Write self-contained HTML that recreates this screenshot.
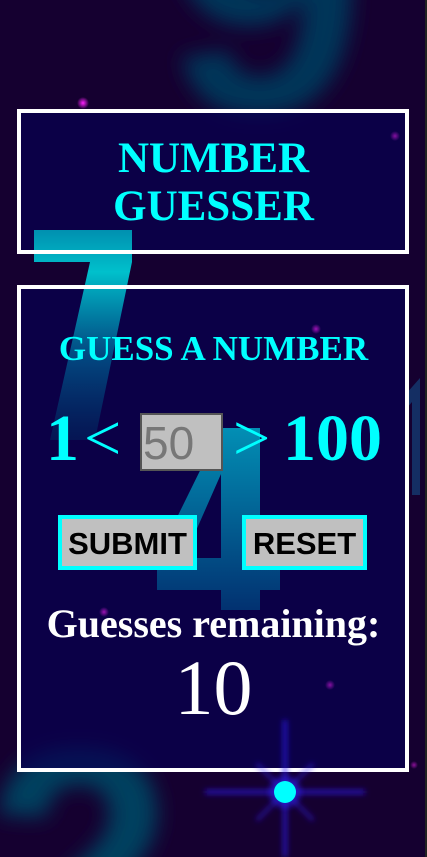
<!DOCTYPE html>
<html><head><meta charset="utf-8"><style>
html,body{margin:0;padding:0;overflow:hidden;width:427px;height:857px}
body{background:#150030;position:relative;font-family:"Liberation Serif",serif}
.bg{position:absolute;left:0;top:0;display:block}
.box{position:absolute;left:17px;width:384px;border:4px solid transparent;background:rgba(8,0,80,0.72)}
.brd{position:absolute;left:17px;width:384px;border:4px solid #fff}
.t{position:absolute;left:0;width:427px;text-align:center;font-weight:bold;color:#00ffff;white-space:nowrap}
.a{position:absolute;font-weight:bold;color:#00ffff;white-space:nowrap;font-size:66px;line-height:66px;top:406px}
.btn{position:absolute;top:515px;height:47px;border:4px solid #00ffff;background:#c0c0c0;font-family:"Liberation Sans",sans-serif;font-weight:bold;font-size:31px;color:#000;line-height:50px;text-align:center;white-space:nowrap}
</style></head><body>
<svg class="bg" width="427" height="857">
<defs>
<filter id="bl" x="-50%" y="-50%" width="200%" height="200%"><feGaussianBlur stdDeviation="10"/></filter>
<radialGradient id="dot"><stop offset="0" stop-color="#ff20ff"/><stop offset="1" stop-color="#ff20ff" stop-opacity="0"/></radialGradient>
</defs>
<text x="165" y="112" font-family="Liberation Sans" font-weight="bold" font-size="360" fill="#003458" filter="url(#bl)">9</text>
<text x="-15" y="985" font-family="Liberation Sans" font-weight="bold" font-size="340" fill="#00405e" filter="url(#bl)">2</text>
<polygon points="405,395 420,378 420,495 412,495 412,402 405,410" fill="#143a70" opacity="0.8"/>
<circle cx="83" cy="103" r="6" fill="url(#dot)"/>
<circle cx="414" cy="765" r="4" fill="url(#dot)" opacity="0.5"/>
</svg>
<div class="box" style="top:109px;height:137px"></div>
<div class="box" style="top:285px;height:479px"></div>
<svg class="bg" width="427" height="857">
<defs>
<linearGradient id="g7" x1="0" y1="0" x2="0" y2="1"><stop offset="0" stop-color="#0090b0"/><stop offset="0.2" stop-color="#00c0cc"/><stop offset="0.6" stop-color="#005a90" stop-opacity="0.8"/><stop offset="1" stop-color="#002a60" stop-opacity="0.5"/></linearGradient>
<linearGradient id="g4" x1="0" y1="0" x2="0" y2="1"><stop offset="0" stop-color="#00a8c8"/><stop offset="1" stop-color="#003a78"/></linearGradient>
<radialGradient id="dot2"><stop offset="0" stop-color="#ff20ff"/><stop offset="1" stop-color="#ff20ff" stop-opacity="0"/></radialGradient>
</defs>
<polygon points="34,230 132,230 132,262 95,440 50,440 90,262 34,262" fill="url(#g7)"/>
<path fill-rule="evenodd" d="M221,428 L260,428 L260,558 L280,558 L280,590 L260,590 L260,610 L221,610 L221,590 L157,590 L157,558 Z M221,474 L221,558 L184,558 Z" fill="url(#g4)" opacity="0.85"/>
<circle cx="395" cy="136" r="5" fill="url(#dot2)" opacity="0.5"/>
<circle cx="316" cy="329" r="5" fill="url(#dot2)" opacity="0.6"/>
<circle cx="104" cy="612" r="5" fill="url(#dot2)" opacity="0.6"/>
<circle cx="330" cy="685" r="5" fill="url(#dot2)" opacity="0.5"/>
</svg>
<div class="brd" style="top:109px;height:137px"></div>
<div class="brd" style="top:285px;height:479px"></div>
<div class="t" style="top:135px;font-size:43px;line-height:48px">NUMBER<br>GUESSER</div>
<div class="t" style="top:331px;font-size:35px;line-height:36px">GUESS A NUMBER</div>
<div class="a" style="left:46px">1</div>
<div class="a" style="left:84px;font-weight:normal">&lt;</div>
<div style="position:absolute;left:140px;top:413px;width:78px;height:54px;border:2px solid #555;background:#c0c0c0;font-family:'Liberation Sans',sans-serif;font-size:46px;color:#777;line-height:56px;padding-left:1px;box-sizing:content-box">50</div>
<div class="a" style="left:233px;font-weight:normal">&gt;</div>
<div class="a" style="left:283px">100</div>
<div class="btn" style="left:58px;width:131px">SUBMIT</div>
<div class="btn" style="left:242px;width:117px">RESET</div>
<div class="t" style="top:604px;color:#fff;font-size:40px;line-height:40px">Guesses remaining:</div>
<div class="t" style="top:649px;color:#fff;font-weight:normal;font-size:78px;line-height:78px">10</div>
<svg class="bg" width="427" height="857" style="pointer-events:none">
<defs><filter id="bl2" x="-50%" y="-50%" width="200%" height="200%"><feGaussianBlur stdDeviation="3"/></filter></defs>
<g filter="url(#bl2)" fill="#3020ff">
<rect x="205" y="790" width="160" height="4" opacity="0.7"/>
<rect x="283" y="720" width="4" height="137" opacity="0.7"/>
<rect x="283" y="752" width="4" height="80" transform="rotate(45 285 792)" opacity="0.45"/>
<rect x="283" y="752" width="4" height="80" transform="rotate(-45 285 792)" opacity="0.45"/>
</g>
<circle cx="285" cy="792" r="16" fill="#3020ff" opacity="0.5" filter="url(#bl2)"/>
<circle cx="285" cy="792" r="11" fill="#00ffff"/>
<rect x="425" y="0" width="2" height="857" fill="#222"/>
</svg>
</body></html>
